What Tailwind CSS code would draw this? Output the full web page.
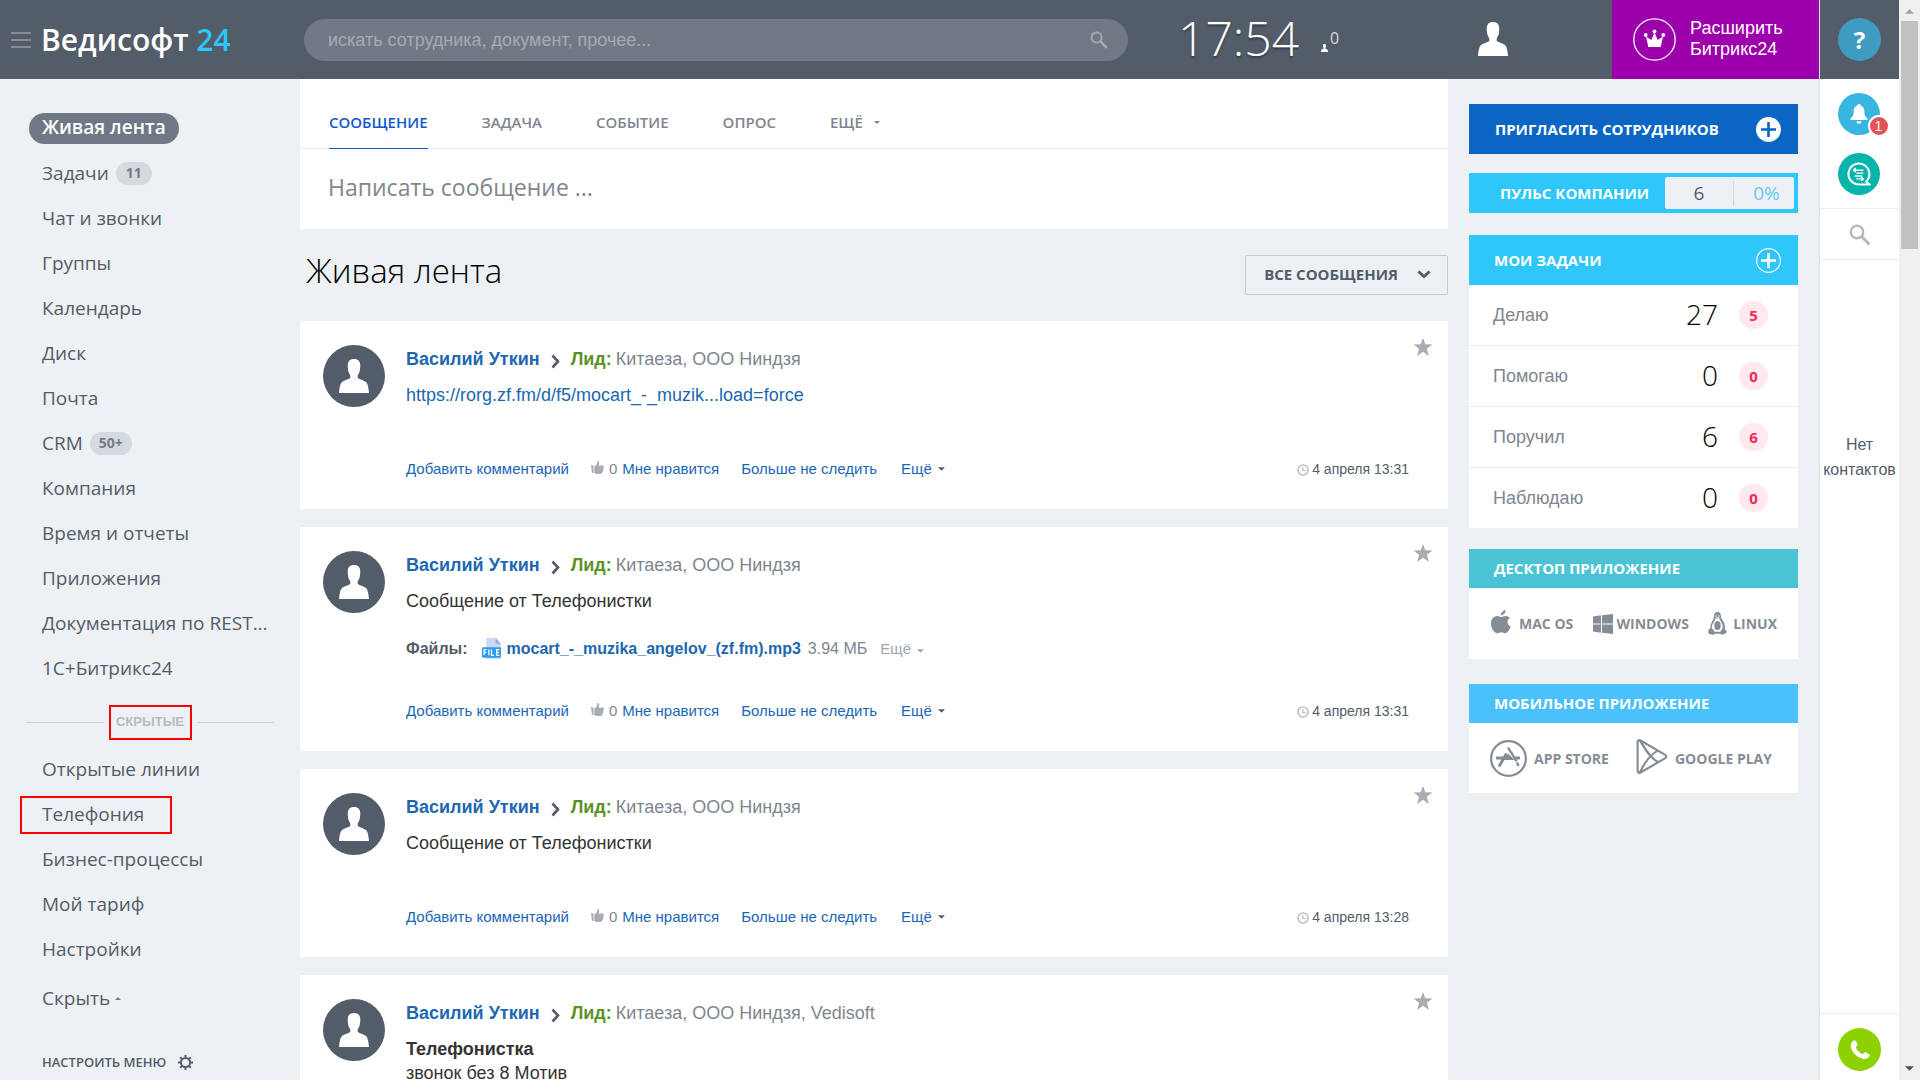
<!DOCTYPE html>
<html lang="ru">
<head>
<meta charset="utf-8">
<meta name="viewport" content="width=device-width, initial-scale=1">
<title>Ведисофт 24 — Живая лента</title>
<script src="https://cdn.jsdelivr.net/npm/@tailwindcss/browser@4"></script>
</head>
<body class="flex h-screen overflow-hidden bg-[#edf1f4] font-['Liberation_Sans',Arial,sans-serif] text-[#535c69]">

<svg class="hidden" aria-hidden="true">
  <symbol id="person" viewBox="0 0 30 34"><path d="M15 0c4.300 0 6.500 2.600 6.300 7.200l-.5 4.500c-.5 2.300-1.500 3.500-2.100 4.700v2.300c.8 1.500 6.300 2.600 8.300 4.300C29 25 29.600 29 30 34H0c.4-5 1-9 3-11 2-1.700 7.500-2.800 8.300-4.300v-2.300c-.6-1.200-1.600-2.400-2.100-4.700l-.5-4.500C8.500 2.600 10.700 0 15 0z"/></symbol>
  <symbol id="star" viewBox="0 0 20 19"><path d="M10 0l2.500 6.700 7.500.2-5.900 4.500L16.200 19 10 14.600 3.800 19l2.100-7.600L0 6.900l7.500-.2z"/></symbol>
  <symbol id="thumb" viewBox="0 0 13 13"><path d="M0 4l2.500.6V12L1 12zM3.300 5.600C5 4.800 6.200 3 6.200 1c0-1.300 1.800-1.200 2 .5.100 1.200-.2 2.200-.4 3.200l4.200-.2c1 .2 1 1.300.4 1.700.6.500.4 1.500-.2 1.800.5.600.2 1.500-.4 1.700.3.700 0 1.400-.6 1.600 0 1-.6 1.600-1.600 1.600H5.500c-.9 0-1.600-.6-2.200-.9z"/></symbol>
  <symbol id="chevron" viewBox="0 0 9 15"><path d="M1.500 1.500l5.500 6-5.500 6" fill="none" stroke="currentColor" stroke-width="2.600"/></symbol>
  <symbol id="clock" viewBox="0 0 12 12"><circle cx="6" cy="6" r="5" fill="none" stroke="currentColor" stroke-width="1.700"/><path d="M5.800 3v3.300H9" fill="none" stroke="currentColor" stroke-width="1.300"/></symbol>
  <symbol id="caret" viewBox="0 0 8 4"><path d="M0 0h8L4 4z"/></symbol>
  <symbol id="lens" viewBox="0 0 22 22"><circle cx="8" cy="8" r="6.200" fill="none" stroke="currentColor" stroke-width="2.400"/><path d="M12.500 12.500l8 8" stroke="currentColor" stroke-width="3"/></symbol>
</svg>

<div class="flex min-w-0 flex-1 flex-col">
  <header class="flex h-[79px] shrink-0 items-center bg-[#535c69]">
    <div class="flex w-[304px] shrink-0 items-center pl-[11px]">
      <button type="button" aria-label="Меню" class="flex w-5 flex-col gap-[5px]"><span class="h-[2px] bg-[#868d95]"></span><span class="h-[2px] bg-[#868d95]"></span><span class="h-[2px] bg-[#868d95]"></span></button>
      <a href="#" class="ml-[10px] font-['Open_Sans',sans-serif] text-[30px] leading-10 font-semibold text-white">Ведисофт <span class="text-[#2fc7f7]">24</span></a>
    </div>
    <label class="flex h-[42px] w-[824px] items-center rounded-full bg-[#717a84] pr-5 pl-6">
      <input type="text" aria-label="Поиск" placeholder="искать сотрудника, документ, прочее..." class="min-w-0 flex-1 bg-transparent pt-[2px] text-[18px] outline-none placeholder:text-[#a5abb2]">
      <svg class="size-[18px] text-[#a5abb2]"><use href="#lens"/></svg>
    </label>
    <div class="ml-[50px] flex flex-1 items-center">
      <span class="pb-1 font-['Open_Sans',sans-serif] text-[48px] leading-[60px] font-light text-white [text-shadow:0_2px_2px_rgba(0,0,0,.35)]">17:54</span>
      <svg class="mt-4 ml-[22px] h-2 w-[7px] fill-white"><use href="#person"/></svg>
      <span class="ml-[2px] pb-[3px] font-['Open_Sans',sans-serif] text-[16px] text-[#d5d8dc]">0</span>
    </div>
    <button type="button" aria-label="Профиль" class="mr-[104px] shrink-0 pb-[2px]"><svg class="h-[34px] w-[30px] fill-white"><use href="#person"/></svg></button>
    <button type="button" class="flex h-full w-[207px] shrink-0 items-center gap-[14px] bg-[#9c00aa] pl-[21px] text-left text-[18px] leading-[21px] text-white">
      <svg class="size-[43px]" viewBox="0 0 43 43"><circle cx="21.500" cy="21.500" r="20.700" fill="none" stroke="#fff" stroke-width="1.300"/><g fill="#fff"><path d="M13 18.500l5.300 3.500 3.200-7.500 3.200 7.500 5.300-3.500-2.300 10.500H15.300z"/><circle cx="21.500" cy="13.500" r="2"/><circle cx="12.700" cy="17" r="1.900"/><circle cx="30.300" cy="17" r="1.900"/></g></svg>
      <span class="pb-[2px]">Расширить<br>Битрикс24</span>
    </button>
  </header>

  <div class="flex min-h-0 flex-1">
    <nav class="w-[300px] shrink-0 pt-[27px] font-['Open_Sans',sans-serif] text-[19px] leading-[45px]">
      <ul>
        <li class="flex h-[45px] items-center pl-[29px]"><a href="#" class="h-[31px] rounded-full bg-[#6f7884] px-[13px] leading-[29px] font-semibold text-white">Живая лента</a></li>
        <li class="flex h-[45px] items-center pl-[42px]"><a href="#">Задачи</a><span class="ml-[7px] h-[23px] rounded-full bg-[#d4dadf] px-[10px] text-[14px] leading-[22px] font-bold text-[#737c86]">11</span></li>
        <li class="h-[45px] pl-[42px]"><a href="#">Чат и звонки</a></li>
        <li class="h-[45px] pl-[42px]"><a href="#">Группы</a></li>
        <li class="h-[45px] pl-[42px]"><a href="#">Календарь</a></li>
        <li class="h-[45px] pl-[42px]"><a href="#">Диск</a></li>
        <li class="h-[45px] pl-[42px]"><a href="#">Почта</a></li>
        <li class="flex h-[45px] items-center pl-[42px]"><a href="#">CRM</a><span class="ml-[7px] h-[23px] rounded-full bg-[#d4dadf] px-[9px] text-[14px] leading-[22px] font-bold text-[#737c86]">50+</span></li>
        <li class="h-[45px] pl-[42px]"><a href="#">Компания</a></li>
        <li class="h-[45px] pl-[42px]"><a href="#">Время и отчеты</a></li>
        <li class="h-[45px] pl-[42px]"><a href="#">Приложения</a></li>
        <li class="h-[45px] pl-[42px]"><a href="#">Документация по REST...</a></li>
        <li class="h-[45px] pl-[42px]"><a href="#">1С+Битрикс24</a></li>
      </ul>
      <div class="mt-[14px] mb-[7px] flex h-[35px] items-center gap-[5px] px-[26px]">
        <span class="h-px flex-1 bg-[#cdd2d6]"></span>
        <span class="flex h-[35px] w-[83px] items-center justify-center border-2 border-[#f00] pb-[2px] font-['Liberation_Sans',sans-serif] text-[13px] font-bold text-[#b6bbc1]">СКРЫТЫЕ</span>
        <span class="h-px flex-1 bg-[#cdd2d6]"></span>
      </div>
      <ul>
        <li class="h-[45px] pl-[42px]"><a href="#">Открытые линии</a></li>
        <li class="relative h-[45px] pl-[42px]"><a href="#">Телефония</a><span class="pointer-events-none absolute top-1 left-5 h-[38px] w-[152px] border-2 border-[#f00]"></span></li>
        <li class="h-[45px] pl-[42px]"><a href="#">Бизнес-процессы</a></li>
        <li class="h-[45px] pl-[42px]"><a href="#">Мой тариф</a></li>
        <li class="h-[45px] pl-[42px]"><a href="#">Настройки</a></li>
      </ul>
      <button type="button" class="mt-1 flex items-center gap-[5px] pl-[42px]">Скрыть <svg class="h-[3px] w-[6px] rotate-180 fill-[#737c86]"><use href="#caret"/></svg></button>
      <button type="button" class="mt-5 flex items-center gap-3 pl-[42px] text-[13px] leading-[42px] font-semibold">НАСТРОИТЬ МЕНЮ
        <svg class="size-[15px]" viewBox="0 0 15 15" fill="none" stroke="currentColor"><circle cx="7.500" cy="7.500" r="4.600" stroke-width="2"/><path d="M7.500 0v2.500M7.500 12.500V15M0 7.500h2.500M12.500 7.500H15M2.200 2.200l1.700 1.700M11.100 11.100l1.700 1.700M12.800 2.200l-1.700 1.700M3.900 11.100l-1.700 1.700" stroke-width="2"/></svg>
      </button>
    </nav>

    <main class="min-w-0 flex-1">
      <section class="h-[150px] bg-white">
        <div class="flex h-[70px] items-end gap-[54px] border-b border-[#eceeef] pl-[29px] font-['Open_Sans',sans-serif] text-[15px] leading-[51px] font-semibold text-[#80868e]">
          <button type="button" class="-mb-px border-b border-[#1058d0] text-[#1058d0]">СООБЩЕНИЕ</button>
          <button type="button">ЗАДАЧА</button>
          <button type="button">СОБЫТИЕ</button>
          <button type="button">ОПРОС</button>
          <button type="button" class="flex items-center gap-[11px]">ЕЩЁ <svg class="h-[3px] w-[6px] fill-[#80868e]"><use href="#caret"/></svg></button>
        </div>
        <input type="text" aria-label="Сообщение" placeholder="Написать сообщение ..." class="block h-20 w-full bg-transparent pb-1 pl-7 font-['Open_Sans',sans-serif] text-[23px] outline-none placeholder:text-[#80868e]">
      </section>

      <div class="flex h-[92px] items-center justify-between pl-[6px]">
        <h1 class="pb-[10px] font-['Open_Sans',sans-serif] text-[33px] leading-[45px] font-light text-black">Живая лента</h1>
        <button type="button" class="flex h-10 items-center gap-[19px] rounded-[2px] border border-[#c6cbd0] pr-[16px] pb-[2px] pl-[18px] font-['Open_Sans',sans-serif] text-[15px] font-bold">ВСЕ СООБЩЕНИЯ
          <svg class="h-[9px] w-[14px]" viewBox="0 0 14 9"><path d="M1.500 1.500L7 6.500l5.500-5" fill="none" stroke="currentColor" stroke-width="3"/></svg>
        </button>
      </div>

      <div class="flex flex-col gap-[18px]">
        <article class="relative flex gap-[21px] bg-white pt-6 pr-[39px] pl-[23px]">
          <span class="flex size-[62px] shrink-0 items-center justify-center rounded-full bg-[#535c69]"><svg class="h-[34px] w-[30px] fill-white"><use href="#person"/></svg></span>
          <div class="min-w-0 flex-1 pt-[2px]">
            <div class="flex items-center text-[18px] leading-6"><a href="#" class="font-bold text-[#2067b0]">Василий Уткин</a><svg class="mt-1 ml-[11px] h-[15px] w-[9px]"><use href="#chevron"/></svg><span class="ml-[11px] font-bold text-[#5a9323]">Лид:</span><a href="#" class="ml-1 text-[#80868e]">Китаеза, ООО Ниндзя</a></div>
            <p class="pt-3 text-[18px] leading-6"><a href="#" class="text-[#2067b0]">https://rorg.zf.fm/d/f5/mocart_-_muzik...load=force</a></p>
            <div class="flex items-center pt-[52px] pb-[30px] text-[15px] leading-5 text-[#1a66b8]"><a href="#">Добавить комментарий</a><svg class="mb-1 ml-[22px] size-[13px] fill-[#a8adb4]"><use href="#thumb"/></svg><span class="mx-[5px] text-[#80868e]">0</span><a href="#">Мне нравится</a><a href="#" class="ml-[22px]">Больше не следить</a><a href="#" class="ml-6">Ещё</a><svg class="ml-[6px] h-1 w-[7px] fill-[#535c69]"><use href="#caret"/></svg><svg class="mt-[2px] ml-auto size-3 text-[#c0c4c9]"><use href="#clock"/></svg><time class="ml-[3px] text-[14px] text-[#535c69]">4 апреля 13:31</time></div>
          </div>
          <button type="button" aria-label="В избранное" class="absolute top-[17px] right-[15px]"><svg class="h-[18px] w-5 fill-[#a8adb4]"><use href="#star"/></svg></button>
        </article>

        <article class="relative flex gap-[21px] bg-white pt-6 pr-[39px] pl-[23px]">
          <span class="flex size-[62px] shrink-0 items-center justify-center rounded-full bg-[#535c69]"><svg class="h-[34px] w-[30px] fill-white"><use href="#person"/></svg></span>
          <div class="min-w-0 flex-1 pt-[2px]">
            <div class="flex items-center text-[18px] leading-6"><a href="#" class="font-bold text-[#2067b0]">Василий Уткин</a><svg class="mt-1 ml-[11px] h-[15px] w-[9px]"><use href="#chevron"/></svg><span class="ml-[11px] font-bold text-[#5a9323]">Лид:</span><a href="#" class="ml-1 text-[#80868e]">Китаеза, ООО Ниндзя</a></div>
            <p class="pt-3 text-[18px] leading-6 text-[#333]">Сообщение от Телефонистки</p>
            <div class="flex items-center pt-6 text-[16px] leading-6 text-[#80868e]"><span class="font-bold text-[#535c69]">Файлы:</span>
              <svg class="ml-[14px] h-[22px] w-[20px]" viewBox="0 0 19 19" preserveAspectRatio="none"><path d="M4 0h9l5 5v13H4z" fill="#c9daf2"/><path d="M13 0v5h5z" fill="#8fb2e4"/><rect y="8" width="18" height="9" rx="1" fill="#2b9cf0"/><path d="M2 15v-5h2.500M2 12.500h2M6.500 10v5M9 10v5h2.500M16.500 10H14v5h2.500M14 12.500h2" fill="none" stroke="#fff" stroke-width="1.200"/></svg>
              <a href="#" class="ml-[5px] font-bold text-[#2067b0]">mocart_-_muzika_angelov_(zf.fm).mp3</a><span class="ml-[7px]">3.94 МБ</span><button type="button" class="ml-[13px] flex items-center text-[15px] text-[#a0a5ab]">Ещё<svg class="mt-1 ml-[6px] h-1 w-[7px] fill-[#a0a5ab]"><use href="#caret"/></svg></button></div>
            <div class="flex items-center pt-10 pb-[30px] text-[15px] leading-5 text-[#1a66b8]"><a href="#">Добавить комментарий</a><svg class="mb-1 ml-[22px] size-[13px] fill-[#a8adb4]"><use href="#thumb"/></svg><span class="mx-[5px] text-[#80868e]">0</span><a href="#">Мне нравится</a><a href="#" class="ml-[22px]">Больше не следить</a><a href="#" class="ml-6">Ещё</a><svg class="ml-[6px] h-1 w-[7px] fill-[#535c69]"><use href="#caret"/></svg><svg class="mt-[2px] ml-auto size-3 text-[#c0c4c9]"><use href="#clock"/></svg><time class="ml-[3px] text-[14px] text-[#535c69]">4 апреля 13:31</time></div>
          </div>
          <button type="button" aria-label="В избранное" class="absolute top-[17px] right-[15px]"><svg class="h-[18px] w-5 fill-[#a8adb4]"><use href="#star"/></svg></button>
        </article>

        <article class="relative flex gap-[21px] bg-white pt-6 pr-[39px] pl-[23px]">
          <span class="flex size-[62px] shrink-0 items-center justify-center rounded-full bg-[#535c69]"><svg class="h-[34px] w-[30px] fill-white"><use href="#person"/></svg></span>
          <div class="min-w-0 flex-1 pt-[2px]">
            <div class="flex items-center text-[18px] leading-6"><a href="#" class="font-bold text-[#2067b0]">Василий Уткин</a><svg class="mt-1 ml-[11px] h-[15px] w-[9px]"><use href="#chevron"/></svg><span class="ml-[11px] font-bold text-[#5a9323]">Лид:</span><a href="#" class="ml-1 text-[#80868e]">Китаеза, ООО Ниндзя</a></div>
            <p class="pt-3 text-[18px] leading-6 text-[#333]">Сообщение от Телефонистки</p>
            <div class="flex items-center pt-[52px] pb-[30px] text-[15px] leading-5 text-[#1a66b8]"><a href="#">Добавить комментарий</a><svg class="mb-1 ml-[22px] size-[13px] fill-[#a8adb4]"><use href="#thumb"/></svg><span class="mx-[5px] text-[#80868e]">0</span><a href="#">Мне нравится</a><a href="#" class="ml-[22px]">Больше не следить</a><a href="#" class="ml-6">Ещё</a><svg class="ml-[6px] h-1 w-[7px] fill-[#535c69]"><use href="#caret"/></svg><svg class="mt-[2px] ml-auto size-3 text-[#c0c4c9]"><use href="#clock"/></svg><time class="ml-[3px] text-[14px] text-[#535c69]">4 апреля 13:28</time></div>
          </div>
          <button type="button" aria-label="В избранное" class="absolute top-[17px] right-[15px]"><svg class="h-[18px] w-5 fill-[#a8adb4]"><use href="#star"/></svg></button>
        </article>

        <article class="relative flex gap-[21px] bg-white pt-6 pr-[39px] pb-10 pl-[23px]">
          <span class="flex size-[62px] shrink-0 items-center justify-center rounded-full bg-[#535c69]"><svg class="h-[34px] w-[30px] fill-white"><use href="#person"/></svg></span>
          <div class="min-w-0 flex-1 pt-[2px]">
            <div class="flex items-center text-[18px] leading-6"><a href="#" class="font-bold text-[#2067b0]">Василий Уткин</a><svg class="mt-1 ml-[11px] h-[15px] w-[9px]"><use href="#chevron"/></svg><span class="ml-[11px] font-bold text-[#5a9323]">Лид:</span><a href="#" class="ml-1 text-[#80868e]">Китаеза, ООО Ниндзя, Vedisoft</a></div>
            <p class="pt-3 text-[18px] leading-6 text-[#333]"><b>Телефонистка</b><br>звонок без 8 Мотив</p>
          </div>
          <button type="button" aria-label="В избранное" class="absolute top-[17px] right-[15px]"><svg class="h-[18px] w-5 fill-[#a8adb4]"><use href="#star"/></svg></button>
        </article>
      </div>
    </main>

    <aside class="mr-[21px] ml-[21px] w-[329px] shrink-0 pt-[25px] font-['Open_Sans',sans-serif] text-[15px] font-bold text-white">
      <button type="button" class="flex h-[50px] w-full items-center justify-between bg-[#0b66c3] pr-[17px] pl-[26px]">ПРИГЛАСИТЬ СОТРУДНИКОВ
        <svg class="size-[25px]" viewBox="0 0 25 25"><circle cx="12.500" cy="12.500" r="12.500" fill="#fff"/><path d="M12.500 5v15M5 12.500h15" stroke="#0b66c3" stroke-width="2.600"/></svg></button>

      <div class="mt-[19px] flex h-10 items-center justify-between rounded-[1px] bg-[#2fc6f9] pr-1 pl-[31px]">ПУЛЬС КОМПАНИИ
        <span class="flex h-8 w-[129px] items-center rounded-[2px] bg-[#edf1f4] text-center text-[19px] font-normal"><span class="flex-1 text-[#535c69]">6</span><span class="h-[25px] w-px bg-[#b5e2f2]"></span><span class="w-[60px] pl-[5px] text-[#6cc7ef]">0%</span></span></div>

      <section class="mt-[22px] bg-white">
        <h2 class="flex h-[50px] items-center justify-between bg-[#2fc6f9] pr-[17px] pl-[25px]">МОИ ЗАДАЧИ
          <button type="button" aria-label="Добавить задачу"><svg class="block size-[25px]" viewBox="0 0 25 25" fill="none" stroke="#fff"><circle cx="12.500" cy="12.500" r="11.900" stroke-width="1.200"/><path d="M12.500 5v15M5 12.500h15" stroke-width="2.600"/></svg></button></h2>
        <ul class="divide-y divide-[#edeef0] font-normal text-[#80868e]">
          <li class="flex h-[61px] items-center pr-[30px] pl-6"><a href="#" class="flex-1 font-['Liberation_Sans',sans-serif] text-[18px]">Делаю</a><span class="pb-[2px] text-[28px] font-light text-black">27</span><span class="ml-[21px] h-7 w-[29px] rounded-full bg-[#ffe8ee] text-center leading-7 font-bold text-[#f2295b]">5</span></li>
          <li class="flex h-[61px] items-center pr-[30px] pl-6"><a href="#" class="flex-1 font-['Liberation_Sans',sans-serif] text-[18px]">Помогаю</a><span class="pb-[2px] text-[28px] font-light text-black">0</span><span class="ml-[21px] h-7 w-[29px] rounded-full bg-[#ffe8ee] text-center leading-7 font-bold text-[#f2295b]">0</span></li>
          <li class="flex h-[61px] items-center pr-[30px] pl-6"><a href="#" class="flex-1 font-['Liberation_Sans',sans-serif] text-[18px]">Поручил</a><span class="pb-[2px] text-[28px] font-light text-black">6</span><span class="ml-[21px] h-7 w-[29px] rounded-full bg-[#ffe8ee] text-center leading-7 font-bold text-[#f2295b]">6</span></li>
          <li class="flex h-[60px] items-center pr-[30px] pl-6"><a href="#" class="flex-1 font-['Liberation_Sans',sans-serif] text-[18px]">Наблюдаю</a><span class="pb-[2px] text-[28px] font-light text-black">0</span><span class="ml-[21px] h-7 w-[29px] rounded-full bg-[#ffe8ee] text-center leading-7 font-bold text-[#f2295b]">0</span></li>
        </ul>
      </section>

      <section class="mt-[21px] bg-white">
        <h2 class="bg-[#4ac4d5] pl-[25px] leading-[39px]">ДЕСКТОП ПРИЛОЖЕНИЕ</h2>
        <div class="flex h-[71px] items-center justify-between pr-[21px] pl-[22px] text-[14px] text-[#868c96]">
          <a href="#" class="flex items-center gap-2"><svg class="mb-1 h-6 w-5" viewBox="0 0 20 24" fill="currentColor"><path d="M14.500 0c.2 2.800-1.800 5.200-4.500 5.300C9.800 2.800 12 .4 14.500 0zM10.300 7c1.200 0 2.500-1.200 4.500-1.100 1.700.1 3.200.8 4.100 2.200-3.600 2.200-3 7 .8 8.300-.8 2.500-2.700 6-5.200 6.800-1.400.3-2.400-.9-4.200-.9s-2.800 1.200-4.200.9C2.500 22.200 0 17.700 0 13.400c0-4.800 3-7.400 6-7.500 1.900 0 3.200 1.100 4.300 1.100z"/></svg>MAC OS</a>
          <a href="#" class="flex items-center gap-[4px]"><svg class="size-5" viewBox="0 0 20 20" fill="currentColor"><path d="M0 2.500l8-1.200v8.200H0zM9 1.200L20 0v9.500H9zM0 10.500h8v8.200l-8-1.200zM9 10.500h11V20L9 18.800z"/></svg>WINDOWS</a>
          <a href="#" class="flex items-center gap-[6px]"><svg class="h-[23px] w-[19px]" viewBox="0 0 19 23"><path d="M9.500 0c2.400 0 3.400 1.600 3.400 3.700 0 3.600 4 6.300 4.100 10.800l-.3 2.500 2.100 2.600c.4.900-2.700 2.900-4.200 3.200-1 .2-1.600-.7-2.100-1H6.700c-.5.500-1 1.200-2 1-1.900-.3-4.400-1-4.500-1.800L.6 17.500 2.500 16c-.8-4 3.700-8.500 3.600-12.300C6.100 1.600 7.100 0 9.500 0z" fill="#868c96"/><path d="M7.200 6.500h4.400c.5 3 3.200 5 3.200 8.500 0 1-.8 2-1.300 3l-1.200 1.800H6.700L3.900 16c-.4-3.300 3-6.500 3.300-9.500z" fill="#fff"/><ellipse cx="9.500" cy="13.500" rx="3.200" ry="4.600" fill="#868c96"/><path d="M7.300 4h1.500M10.200 4h1.500M8 5.800h3" stroke="#fff"/></svg>LINUX</a>
        </div>
      </section>

      <section class="mt-[25px] bg-white">
        <h2 class="bg-[#4ac1fa] pl-[25px] leading-[39px]">МОБИЛЬНОЕ ПРИЛОЖЕНИЕ</h2>
        <div class="flex h-[70px] items-center justify-between pr-[26px] pl-[21px] text-[14px] text-[#868c96]">
          <a href="#" class="flex items-center gap-[7px]"><svg class="size-[37px]" viewBox="0 0 37 37" fill="none" stroke="currentColor"><circle cx="18.500" cy="18.500" r="17.400" stroke-width="2.200"/><path d="M9 26.500L16.500 13.500" stroke-width="3"/><path d="M18 7.500l3 5M21 12l5.500 9.500M27 22.500l1.500 3.500" stroke-width="2.400"/><path d="M6 18h7M24.500 18H30M15.500 18.500l3-2.500 2.500 2.500z" stroke-width="3"/></svg>APP STORE</a>
          <a href="#" class="flex items-center gap-[7px]"><svg class="mb-1 h-[35px] w-8" viewBox="0 0 32 36" fill="none" stroke="currentColor" stroke-width="2.200" stroke-linejoin="round"><path d="M1.200 3c0-1.700 1.500-2.300 3-1.500l25 14.500c2 1.200 2 2.800 0 4l-25 14.500c-1.500.8-3 .2-3-1.500z"/><path d="M3.500 1.500C9 10 14 20 22.500 24M3.500 34.500C8 25 14 16 22 12"/></svg>GOOGLE PLAY</a>
        </div>
      </section>
    </aside>
  </div>
</div>

<aside class="flex w-20 shrink-0 flex-col items-center border-l border-[#dde1e4] bg-white">
  <div class="flex h-[79px] w-full shrink-0 items-center justify-center bg-[#535c69]"><button type="button" class="size-[43px] rounded-full bg-[#3d9cbf] font-['Open_Sans',sans-serif] text-[24px] leading-10 font-bold text-white">?</button></div>
  <div class="flex h-[130px] w-full flex-col items-center gap-[18px] border-b border-[#eceeef] pt-[14px] pr-[2px]">
    <button type="button" aria-label="Уведомления" class="relative flex size-[42px] items-center justify-center rounded-full bg-[#38b6e0]"><svg class="h-5 w-[18px] fill-white" viewBox="0 0 18 20"><path d="M9 0c1 0 1.600.7 1.600 1.600C13 2.500 14.300 4.500 14.300 7c0 4 .7 5.500 3.200 7.500V16H.5v-1.500C3 12.500 3.700 11 3.700 7c0-2.500 1.300-4.500 3.700-5.400C7.400.7 8 0 9 0zM6.500 17.300h5a2.500 2.500 0 0 1-5 0z"/></svg><span class="absolute -right-[10px] -bottom-[2px] size-[22px] rounded-full border-2 border-white bg-[#e35254] text-center text-[14px] leading-[18px] text-white">1</span></button>
    <button type="button" aria-label="Чаты" class="flex size-[42px] items-center justify-center rounded-full bg-[#05b5ab]"><svg class="size-[24px]" viewBox="0 0 22 22" fill="none" stroke="#fff"><path d="M17.500 18A9.600 9.600 0 1 0 11 20.600h10z" stroke-width="1.900" stroke-linejoin="round"/><path d="M6 7.500h9M8 5.500l-2 2 2 2M8.500 10.200H15M7 12.800h7M8.500 15.500H15M13 13.500l2 2-2 2" stroke-width="1.300"/></svg></button>
  </div>
  <button type="button" aria-label="Поиск" class="flex h-[51px] w-full items-center justify-center border-b border-[#eceeef] pt-[2px] text-[#b3b9bd]"><svg class="size-[22px]"><use href="#lens"/></svg></button>
  <p class="flex-1 pt-[172px] text-center text-[16px] leading-[25px]">Нет контактов</p>
  <div class="flex h-[67px] w-full items-start justify-center border-t border-[#eceeef] pt-[14px]"><button type="button" aria-label="Позвонить" class="flex size-[43px] items-center justify-center rounded-full bg-[#8bd200]"><svg class="size-5 fill-white" viewBox="0 0 20 20"><path d="M3.300.8c1-.9 2-.6 2.600.4l1.500 2.500c.5 1 .2 1.800-.7 2.500-.8.600-.9 1.200-.5 2 1.300 2.600 3.200 4.400 5.600 5.600.8.400 1.400.2 2-.6.700-1 1.500-1.200 2.500-.7l2.500 1.600c1 .6 1.200 1.500.4 2.500-1.300 2-3.600 3-6 2.300C6.500 17 2 12.300.8 6.700.4 4.300 1.300 2.300 3.300.8z"/></svg></button></div>
</aside>

<div class="flex w-[21px] shrink-0 flex-col items-center justify-between bg-[#f0f0f0]" aria-hidden="true">
  <div class="flex flex-col items-center"><svg class="mt-[9px] mb-[7px] h-[5px] w-[9px] rotate-180 fill-[#a0a0a0]"><use href="#caret"/></svg><span class="h-[228px] w-[17px] bg-[#c1c1c1]"></span></div>
  <svg class="mb-[9px] h-[5px] w-[9px] fill-[#505050]"><use href="#caret"/></svg>
</div>
</body>
</html>
